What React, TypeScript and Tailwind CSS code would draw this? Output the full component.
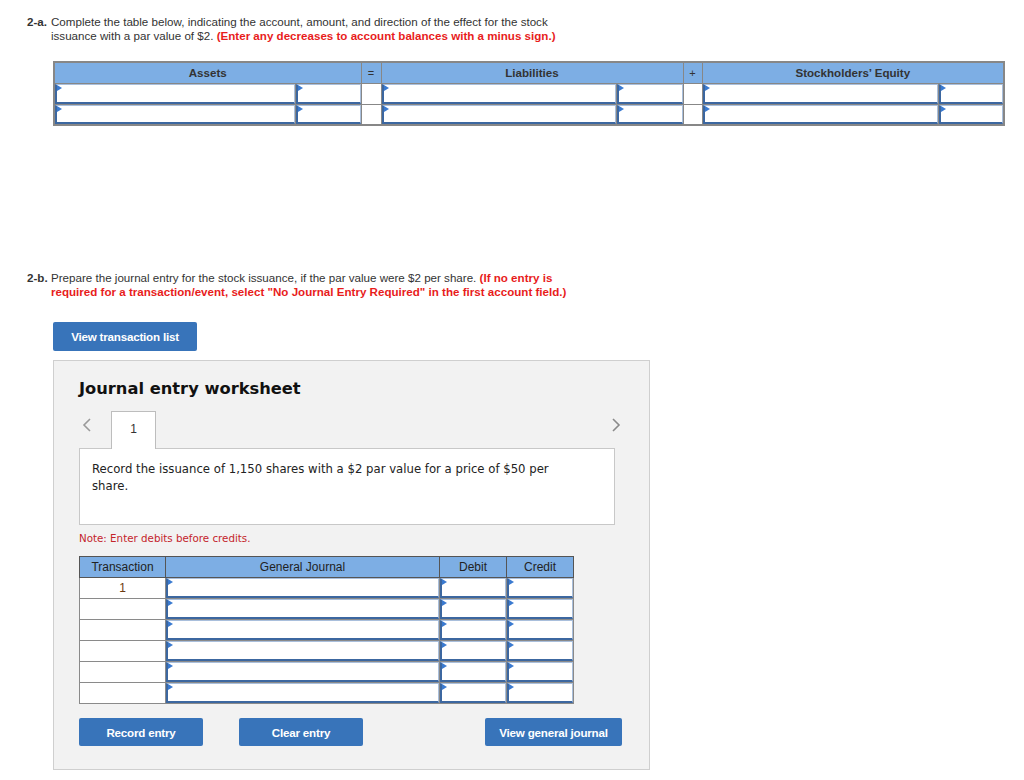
import React from "react";

const arial = { fontFamily: '"Liberation Sans", Arial, sans-serif' };
const verdana = { fontFamily: '"DejaVu Sans", Verdana, sans-serif' };

function Tri() {
  return (
    <span className="absolute left-0 top-0 w-0 h-0 border-y-[3px] border-y-transparent border-l-[5px] border-l-[#3a7ad0]" />
  );
}

function InputCell() {
  return (
    <div className="relative h-full w-full bg-white border-l-2 border-b-2 border-[#3c67a0] border-t border-t-[#a9bfdc] border-r border-r-[#a9bfdc]">
      <Tri />
    </div>
  );
}

function TopTable() {
  const hd = "bg-[#7daee4] border border-[#878787] text-[11.6px] font-bold text-[#333] text-center h-[21px] p-0";
  const cell = "border border-[#878787] p-0 h-[21px]";
  const row = (k: number) => (
    <tr key={k}>
      <td className={cell}><InputCell /></td>
      <td className={cell}><InputCell /></td>
      <td className={cell + " bg-white"} />
      <td className={cell}><InputCell /></td>
      <td className={cell}><InputCell /></td>
      <td className={cell + " bg-white"} />
      <td className={cell}><InputCell /></td>
      <td className={cell}><InputCell /></td>
    </tr>
  );
  return (
    <table className="border-collapse border-2 border-[#878787] table-fixed w-[950px]" style={arial}>
      <colgroup>
        <col className="w-[241px]" />
        <col className="w-[66px]" />
        <col className="w-[20px]" />
        <col className="w-[235px]" />
        <col className="w-[67px]" />
        <col className="w-[19px]" />
        <col className="w-[236px]" />
        <col className="w-[66px]" />
      </colgroup>
      <thead>
        <tr>
          <th colSpan={2} className={hd}>Assets</th>
          <th className={hd + " font-normal text-[11px]"}>=</th>
          <th colSpan={2} className={hd}>Liabilities</th>
          <th className={hd + " font-normal text-[11px]"}>+</th>
          <th colSpan={2} className={hd}>Stockholders’ Equity</th>
        </tr>
      </thead>
      <tbody>{[0, 1].map(row)}</tbody>
    </table>
  );
}

function JournalTable() {
  const hd = "bg-[#7daee4] border border-[#555] text-[12px] font-normal text-[#222] text-center h-[21px] p-0";
  const cell = "border border-[#8a8a8a] p-0 h-[21px]";
  return (
    <table className="border-collapse border border-[#777] table-fixed w-[494px]" style={arial}>
      <colgroup>
        <col className="w-[86px]" />
        <col className="w-[274px]" />
        <col className="w-[67px]" />
        <col className="w-[67px]" />
      </colgroup>
      <thead>
        <tr>
          <th className={hd}>Transaction</th>
          <th className={hd}>General Journal</th>
          <th className={hd}>Debit</th>
          <th className={hd}>Credit</th>
        </tr>
      </thead>
      <tbody>
        {[0, 1, 2, 3, 4, 5].map((i) => (
          <tr key={i}>
            <td className={cell + " bg-white text-center text-[12px] text-[#6b3a10] align-top pt-[1px]"}>{i === 0 ? "1" : ""}</td>
            <td className={cell}><InputCell /></td>
            <td className={cell}><InputCell /></td>
            <td className={cell}><InputCell /></td>
          </tr>
        ))}
      </tbody>
    </table>
  );
}

function Btn({ children, w }: { children: React.ReactNode; w: string }) {
  return (
    <button
      className={"shrink-0 h-[28px] rounded-[2px] bg-[#3874ba] text-white text-[11.6px] font-bold tracking-[-0.2px] " + w}
      style={arial}
    >
      {children}
    </button>
  );
}

export default function App() {
  return (
    <div className="w-[1024px] h-[780px] bg-white text-[#333] relative overflow-hidden" style={arial}>
      <div className="pl-[27px] pt-[15px] text-[11.6px] leading-[14px]">
        <div className="flex">
          <span className="font-bold w-[24px] shrink-0">2-a.</span>
          <div>
            Complete the table below, indicating the account, amount, and direction of the effect for the stock
            <br />
            issuance with a par value of $2. <span className="font-bold text-[#e81c1c]">(Enter any decreases to account balances with a minus sign.)</span>
          </div>
        </div>
      </div>

      <div className="pl-[53px] pt-[18px]">
        <TopTable />
      </div>

      <div className="pl-[27px] pt-[145px] text-[11.6px] leading-[14px]">
        <div className="flex">
          <span className="font-bold w-[24px] shrink-0">2-b.</span>
          <div>
            Prepare the journal entry for the stock issuance, if the par value were $2 per share. <span className="font-bold text-[#e81c1c]">(If no entry is</span>
            <br />
            <span className="font-bold text-[#e81c1c]">required for a transaction/event, select "No Journal Entry Required" in the first account field.)</span>
          </div>
        </div>
      </div>

      <div className="pl-[53px] pt-[23px]">
        <Btn w="w-[144px] h-[29px]">View transaction list</Btn>
      </div>

      <div className="ml-[53px] mt-[9px] w-[597px] h-[410px] bg-[#f2f2f2] border border-[#cfcfcf] pl-[25px] pr-[20px]">
        <div className="pt-[18px] text-[16.3px] font-bold text-[#111] leading-[20px]" style={verdana}>
          Journal entry worksheet
        </div>
        <div className="mt-[12px] flex items-end h-[37px] relative">
          <svg width="10" height="14" viewBox="0 0 10 14" className="absolute left-[3px] top-[7px]">
            <path d="M8 1 L2 7 L8 13" fill="none" stroke="#9a9a9a" strokeWidth="1.6" />
          </svg>
          <div className="ml-[32px] w-[45px] h-[38px] bg-white border border-[#bdbdbd] border-b-0 relative z-10 -mb-px text-center text-[12px] pt-[8px]" style={arial}>
            1
          </div>
          <svg width="10" height="14" viewBox="0 0 10 14" className="absolute left-[532px] top-[7px]">
            <path d="M2 1 L8 7 L2 13" fill="none" stroke="#8a8a8a" strokeWidth="1.6" />
          </svg>
        </div>
        <div className="w-[536px] h-[77px] bg-white border border-[#c8c8c8] pl-[12px] pr-[50px] pt-[12px] text-[11.7px] leading-[17px] text-[#222]" style={verdana}>
          Record the issuance of 1,150 shares with a $2 par value for a price of $50 per share.
        </div>
        <div className="mt-[6px] text-[10.3px] text-[#c4242b]" style={verdana}>
          Note: Enter debits before credits.
        </div>
        <div className="mt-[10px]">
          <JournalTable />
        </div>
        <div className="mt-[14px] flex">
          <Btn w="w-[124px]">Record entry</Btn>
          <div className="ml-[36px]">
            <Btn w="w-[124px]">Clear entry</Btn>
          </div>
          <div className="ml-[122px]">
            <Btn w="w-[137px]">View general journal</Btn>
          </div>
        </div>
      </div>
    </div>
  );
}
